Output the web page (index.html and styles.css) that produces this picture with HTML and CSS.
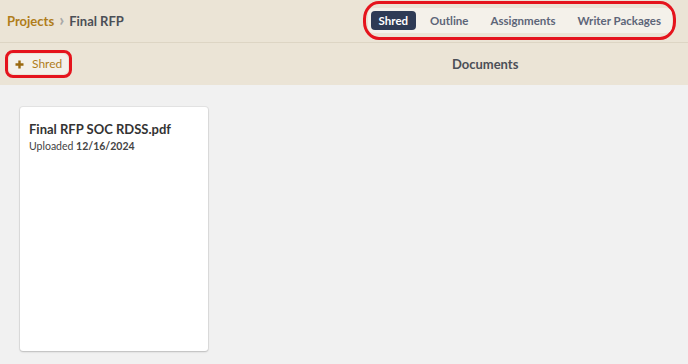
FILE: index.html
```html
<!DOCTYPE html>
<html lang="en">
<head>
  <meta charset="UTF-8">
  <title>Final RFP - Documents</title>
  <link rel="stylesheet" href="styles.css">
</head>
<body>

<header class="topbar">
  <div class="crumbs">
    <a href="#" class="crumb-link">Projects</a>
    <span class="crumb-sep">&#8250;</span>
    <span class="crumb-current">Final RFP</span>
  </div>
  <div class="ring ring-tabs">
    <nav class="tabs">
      <a href="#" class="tab active">Shred</a>
      <a href="#" class="tab">Outline</a>
      <a href="#" class="tab">Assignments</a>
      <a href="#" class="tab">Writer Packages</a>
    </nav>
  </div>
</header>

<div class="toolbar">
  <div class="ring ring-btn">
    <button class="add-btn">
      <svg class="plus" width="9" height="9" viewBox="0 0 9 9"><path d="M4.5 0.5v8M0.5 4.5h8" stroke="#9a6a10" stroke-width="2.4"/></svg>
      Shred
    </button>
  </div>
  <div class="toolbar-title">Documents</div>
</div>

<main class="docs">
  <div class="doc-card">
    <div class="doc-name">Final RFP SOC RDSS.pdf</div>
    <div class="doc-meta">Uploaded <b>12/16/2024</b></div>
  </div>
</main>

</body>
</html>
```

FILE: styles.css
```css
:root {
  --sand: #ebe4d6;
  --sand-light: #f4f1ea;
  --gold: #b07d1a;
  --navy: #2e3b55;
  --ring: #e5141d;
}
* { margin: 0; padding: 0; box-sizing: border-box; }
body {
  font-family: Lato, 'Open Sans', sans-serif;
  background: #f1f1f1;
  width: 688px;
  height: 364px;
  overflow: hidden;
}
.topbar {
  height: 43px;
  background: var(--sand);
  border-bottom: 1px solid #ddd5c4;
  display: flex;
  align-items: center;
  justify-content: space-between;
  padding: 0 12px 0 7px;
}
.crumbs {
  display: flex;
  align-items: center;
  gap: 5px;
  font-size: 13px;
  font-weight: 700;
}
.crumb-link { color: var(--gold); text-decoration: none; }
.crumb-sep { color: #a8a8a8; font-size: 17px; font-weight: 900; line-height: 1; margin-top: -3px; }
.crumb-current { color: #4b4f57; }
.ring {
  border: 3px solid var(--ring);
}
.ring-tabs {
  border-radius: 16px / 18px;
  padding: 4px 1px 4px 2px;
  margin-top: -2px;
}
.tabs {
  display: flex;
  align-items: center;
  background: var(--sand-light);
  border-radius: 6px;
  padding: 3px 0 3px 3px;
}
.tab {
  font-size: 11.5px;
  font-weight: 700;
  color: #5d6578;
  text-decoration: none;
  padding: 3px 11px;
  border-radius: 4px;
  line-height: 13px;
}
.tab.active {
  background: var(--navy);
  color: #fff;
  padding: 3px 8px 3px 8px;
  margin-right: 3px;
}
.toolbar {
  height: 42px;
  background: var(--sand);
  display: flex;
  align-items: center;
  padding-left: 5px;
}
.ring-btn {
  border-radius: 8px;
  padding: 1px;
}
.add-btn {
  font-family: inherit;
  background: var(--sand-light);
  border: none;
  border-radius: 5px;
  color: var(--gold);
  font-size: 12px;
  line-height: 14px;
  padding: 3px 6px 3px 6px;
  display: flex;
  align-items: center;
  cursor: pointer;
}
.plus { margin-right: 8px; }
.toolbar-title {
  flex: 1;
  text-align: center;
  font-size: 13px;
  font-weight: 700;
  color: #4b4f57;
  padding-left: 210px;
}
.docs {
  padding: 22px 20px;
}
.doc-card {
  width: 188px;
  height: 244px;
  background: #fff;
  border-radius: 3px;
  box-shadow: 0 1px 2px rgba(0,0,0,0.18), 0 0 0 1px rgba(0,0,0,0.05);
  padding: 14px 9px;
}
.doc-name {
  font-size: 13px;
  font-weight: 700;
  color: #333;
}
.doc-meta {
  font-size: 10.5px;
  color: #444;
  margin-top: 3px;
}
```
